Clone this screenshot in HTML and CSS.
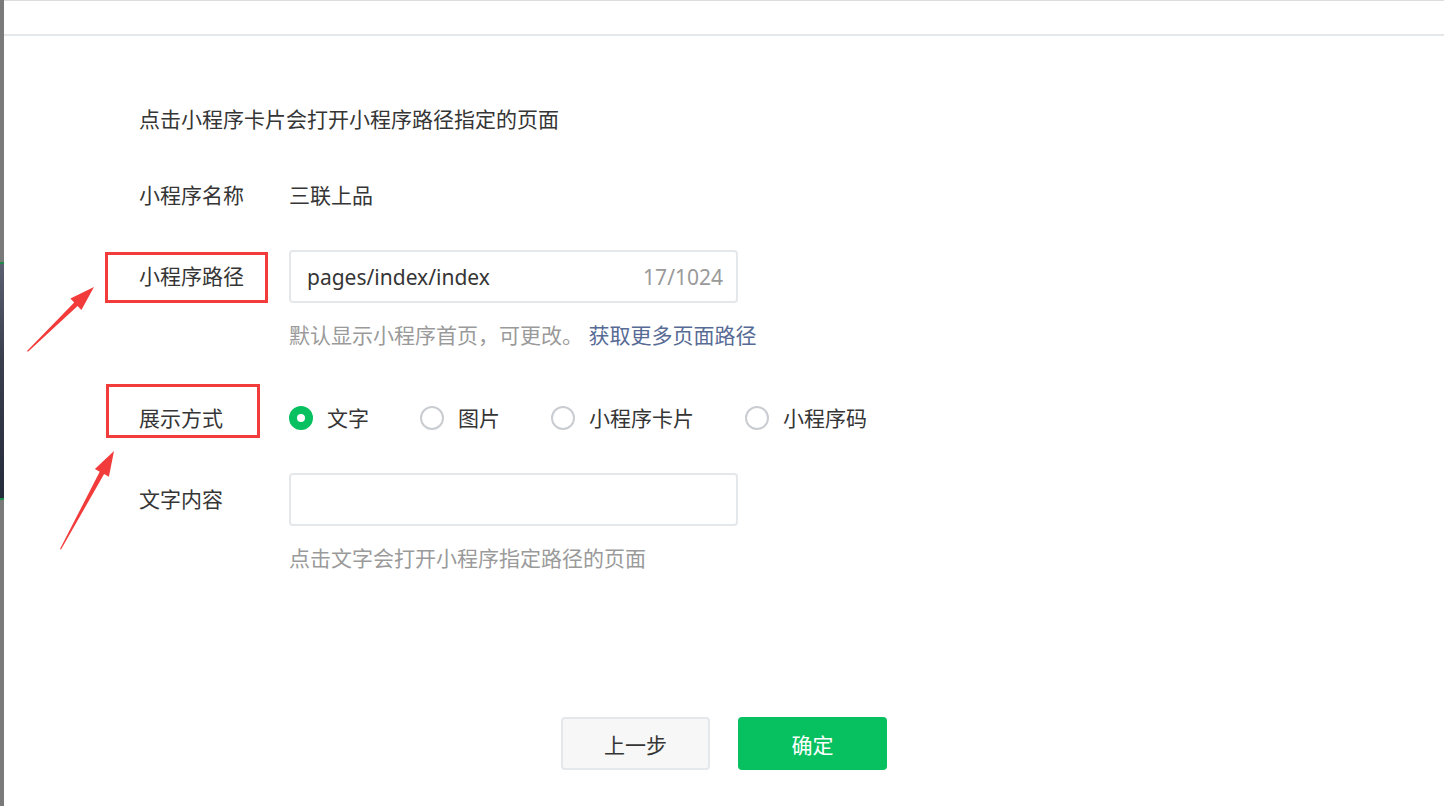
FILE: index.html
```html
<!DOCTYPE html>
<html>
<head>
<title>小程序路径</title>
<meta name="viewport" content="width=device-width, initial-scale=1">
<link rel="stylesheet" href="styles.css">
</head>
<body>
  <div class="page">
    <div class="backdrop">
      <div class="backdrop-photo"></div>
    </div>

    <div class="dialog">
      <div class="dialog-hd"></div>
      <div class="dialog-bd">
        <p class="intro">点击小程序卡片会打开小程序路径指定的页面</p>

        <div class="form-item item-name">
          <div class="form-label">小程序名称</div>
          <div class="form-value">三联上品</div>
        </div>

        <div class="form-item item-path">
          <div class="form-label label-input">小程序路径</div>
          <div class="form-control">
            <div class="input">
              <span class="input-text">pages/index/index</span>
              <span class="input-count">17/1024</span>
            </div>
            <div class="form-tips">默认显示小程序首页，可更改。 <a class="link">获取更多页面路径</a></div>
          </div>
        </div>

        <div class="form-item item-mode">
          <div class="form-label">展示方式</div>
          <div class="radio-group">
            <label class="radio checked"><i class="radio-icon"></i>文字</label>
            <label class="radio"><i class="radio-icon"></i>图片</label>
            <label class="radio"><i class="radio-icon"></i>小程序卡片</label>
            <label class="radio"><i class="radio-icon"></i>小程序码</label>
          </div>
        </div>

        <div class="form-item item-text">
          <div class="form-label label-input">文字内容</div>
          <div class="form-control">
            <div class="input"></div>
            <div class="form-tips">点击文字会打开小程序指定路径的页面</div>
          </div>
        </div>
      </div>

      <div class="dialog-ft">
        <button class="btn btn-default">上一步</button>
        <button class="btn btn-primary">确定</button>
      </div>
    </div>

    <!-- annotations drawn on top of the screenshot -->
    <div class="mark mark-path"></div>
    <div class="mark mark-mode"></div>
    <svg class="arrows" width="130" height="560" viewBox="0 0 130 560">
      <polygon points="27,351 74.2,302.5 70.4,298.5 94,287 81.4,310.1 77.6,306.1 28,351.8" fill="#f23b3b"/>
      <polygon points="60,549 99.7,471.7 94.9,469 114,451 108.9,476.8 104.1,474.1 61,549.5" fill="#f23b3b"/>
    </svg>
  </div>
</body>
</html>
```

FILE: styles.css
```css
html, body {
  margin: 0;
  padding: 0;
  background: #fff;
}

body {
  font-family: "Noto Sans", "Noto Sans CJK SC", sans-serif;
  color: #353535;
  font-size: 21px;
}

.page {
  position: relative;
  display: flex;
  width: 1444px;
  height: 806px;
  overflow: hidden;
}

.backdrop {
  width: 4px;
  background: #7a7a7a;
  padding-top: 262px;
  flex: none;
}

.backdrop-photo {
  height: 234px;
  border-top: 2px solid #1f8a4a;
  border-bottom: 2px solid #1f8a4a;
  background: linear-gradient(#5a6070, #3a3f4e 40%, #242b3a);
}

.dialog {
  flex: 1;
  display: flex;
  flex-direction: column;
  border-top: 1px solid #dcdcdc;
}

.dialog-hd {
  height: 33px;
  border-bottom: 2px solid #e4e8eb;
}

.dialog-bd {
  padding: 67px 0 0 135px;
  flex: 1;
}

.intro {
  margin: 0;
  line-height: 32px;
}

.form-item {
  display: flex;
  align-items: flex-start;
}

.form-label {
  width: 150px;
  line-height: 30px;
  flex: none;
}

.label-input {
  line-height: 53px;
}

.form-value {
  line-height: 30px;
}

.item-name {
  margin-top: 45px;
}

.item-path {
  margin-top: 40px;
}

.item-mode {
  margin-top: 53px;
}

.item-text {
  margin-top: 40px;
}

.input {
  box-sizing: border-box;
  width: 449px;
  height: 53px;
  border: 2px solid #e4e8eb;
  border-radius: 4px;
  display: flex;
  align-items: center;
  justify-content: space-between;
  padding: 0 13px 0 16px;
}

.input-count {
  color: #9a9a9a;
}

.form-tips {
  margin-top: 17px;
  line-height: 30px;
  color: #9a9a9a;
}

.link {
  color: #576b95;
}

.radio-group {
  display: flex;
  line-height: 30px;
}

.radio {
  display: flex;
  align-items: center;
  margin-right: 51px;
}

.radio-icon {
  box-sizing: border-box;
  width: 24px;
  height: 24px;
  border: 2px solid #c9ccd1;
  border-radius: 50%;
  margin-right: 14px;
}

.radio.checked .radio-icon {
  border: 8px solid #07c160;
  background: #fff;
}

.dialog-ft {
  display: flex;
  justify-content: center;
  gap: 28px;
  padding: 0 0 36px;
}

.btn {
  box-sizing: border-box;
  width: 149px;
  height: 53px;
  border-radius: 4px;
  font-family: inherit;
  font-size: 21px;
  cursor: pointer;
}

.btn-default {
  background: #f7f7f7;
  border: 2px solid #e4e8eb;
  color: #353535;
}

.btn-primary {
  background: #07c160;
  border: none;
  color: #fff;
}

.mark {
  position: absolute;
  box-sizing: border-box;
  border: 3px solid #f23b3b;
}

.mark-path {
  left: 105px;
  top: 252px;
  width: 163px;
  height: 51px;
}

.mark-mode {
  left: 106px;
  top: 384px;
  width: 154px;
  height: 54px;
}

.arrows {
  position: absolute;
  left: 0;
  top: 0;
}
```
